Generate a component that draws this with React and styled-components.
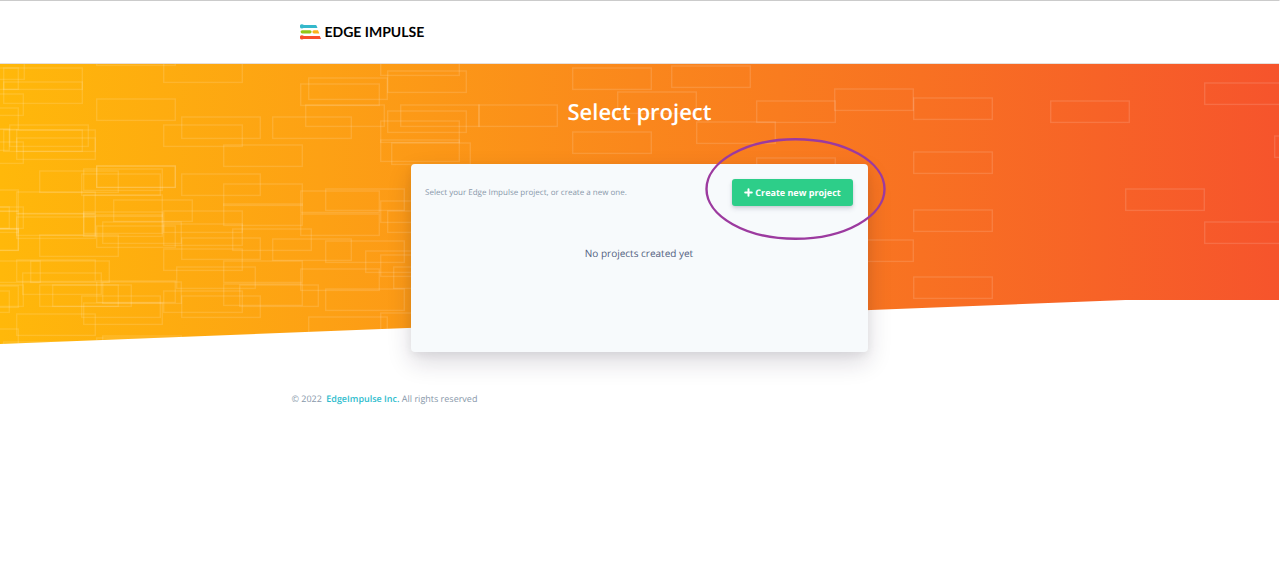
import React from "react";
import styled, { createGlobalStyle } from "styled-components";

const GlobalStyle = createGlobalStyle`
  *, *::before, *::after { box-sizing: border-box; }
  body {
    margin: 0;
    background: #fff;
    font-family: "Open Sans", "Noto Sans", sans-serif;
    color: #525f7f;
    text-rendering: geometricPrecision;
  }
`;

const Page = styled.div`
  border-top: 1px solid #cbcbcb;
  border-right: 1px solid #fff;
`;

const Container = styled.div`
  width: 100%;
  max-width: 696px;
  margin: 0 auto;
`;

const Header = styled.header`
  display: flex;
  align-items: center;
  height: 63px;
  border-bottom: 1px solid #e6e0dc;
`;

const Brand = styled.a`
  display: flex;
  align-items: center;
  gap: 4px;
  width: fit-content;
  margin-left: 8px;
  color: #000;
  font-family: Lato, sans-serif;
  font-size: 14px;
  font-weight: 700;
  line-height: 16px;
  text-decoration: none;
  white-space: nowrap;
`;

const Hero = styled.main`
  position: relative;
  display: flex;
  flex-direction: column;
  align-items: center;
  padding-top: 32px;
`;

const Backdrop = styled.div`
  position: absolute;
  inset: 0 0 auto;
  height: 280px;
  overflow: hidden;
  background: linear-gradient(90deg, #ffb80a 0%, #fda114 25%, #fa871c 50%, #f87122 72%, #f6542c 100%);
  clip-path: polygon(0 0, 100% 0, 100% 236px, 88% 236px, 0 100%);

  svg { display: block; }
`;

const Title = styled.h1`
  position: relative;
  margin: 0 0 36px;
  color: #fff;
  font-size: 22px;
  font-weight: 600;
  line-height: 32px;
`;

const Card = styled.section`
  position: relative;
  width: 457px;
  max-width: 100%;
  min-height: 188px;
  padding: 15px 15px 0 14px;
  border-radius: 4px;
  background: #f7fafc;
  box-shadow: 0 10px 24px rgba(30, 20, 50, 0.16), 0 3px 8px rgba(0, 0, 0, 0.06);
`;

const CardTop = styled.div`
  display: flex;
  align-items: center;
  justify-content: space-between;
`;

const Hint = styled.p`
  margin: 0;
  color: #8898aa;
  font-size: 8px;
  line-height: 12px;
`;

const Action = styled.div`
  position: relative;
`;

const Button = styled.button`
  display: flex;
  align-items: center;
  justify-content: center;
  gap: 2px;
  width: 121px;
  height: 27px;
  padding: 0;
  border: 0;
  border-radius: 3px;
  background: #2dce89;
  box-shadow: 0 3px 5px rgba(50, 50, 93, 0.14), 0 1px 3px rgba(0, 0, 0, 0.1);
  color: #fff;
  font: 700 9px/12px "Open Sans", "Noto Sans", sans-serif;
  text-rendering: inherit;
  white-space: nowrap;
  cursor: pointer;
`;

const Highlight = styled.svg`
  position: absolute;
  top: -41px;
  left: -27px;
  pointer-events: none;
`;

const Empty = styled.p`
  margin: 40px 0 0;
  color: #525f7f;
  font-size: 10px;
  line-height: 14px;
  text-align: center;
`;

const Footer = styled.footer`
  padding: 40px 0;
  color: #8898aa;
  font-size: 9px;
  line-height: 14px;
`;

const FooterLink = styled.a`
  margin-left: 2px;
  color: #2dbccd;
  font-weight: 600;
  text-decoration: none;
`;

const blocks = [
  [-54, -6], [-60, 4], [4, 4], [4, 18], [-55, 30], [-60, 44], [10, 61], [17, 66], [4, 66],
  [17, 74], [-69, 65], [-55, 78], [40, 107], [84, 105], [82, 110], [97, 102], [97, 102],
  [97, 35], [97, -20], [164, -3], [164, 61], [182, 53], [182, 110], [-60, 126], [17, 128],
  [84, 131], [114, 136], [-69, 143], [-55, 143], [-60, 165], [-60, 165], [-60, 147],
  [17, 150], [17, 153], [84, 148], [84, 151], [103, 158], [97, 162], [40, 171], [164, 147],
  [164, 160], [182, 174], [164, 185], [17, 196], [31, 197], [-38, 197], [23, 209],
  [177, 203], [40, 221], [53, 221], [-55, 221], [-60, 222], [-69, 227], [82, 232],
  [97, 217], [103, 218], [84, 239], [164, 227], [182, 232], [17, 250], [-60, 265], [4, 278],
  [97, 274], [103, 272], [224, 81], [224, 120], [301, 20], [309, 14], [306, 41], [273, 53],
  [381, -28], [388, 7], [401, 41], [388, 47], [381, 57], [381, 76], [392, 79], [326, 125],
  [381, -10], [301, 127], [381, 137], [479, 41], [573, 4], [618, 28], [573, 68], [224, 140],
  [301, 150], [388, 147], [233, 165], [273, 175], [326, 177], [366, 187], [381, 191],
  [394, 203], [301, 205], [224, 197], [224, 220], [240, 221], [326, 225], [309, 253],
  [381, 249], [672, 2], [697, 58], [757, 37], [835, 25], [757, 94], [914, 34], [914, 88],
  [914, 146], [835, 176], [914, 213], [1051, 37], [1126, 125], [1205, 19], [1205, 158],
  [1275, 72],
];

function BlockPattern() {
  return (
    <svg width="1280" height="280" fill="none" stroke="#fff" strokeOpacity="0.13" strokeWidth="1.4" aria-hidden="true">
      {blocks.map(([x, y], i) => (
        <rect key={i} x={x - 0.3} y={y} width="78.6" height="21.4" />
      ))}
    </svg>
  );
}

function LogoMark() {
  return (
    <svg width="21" height="16" viewBox="0 0 21 16" aria-hidden="true">
      <g fill="#34b8cb">
        <circle cx="2" cy="2.4" r="2.1" />
        <path d="M2 1h13.6q.7 0 1 .7l.9 2.3H2z" />
      </g>
      <rect x="0.6" y="6.2" width="11" height="3.2" rx="1.6" fill="#93c715" />
      <path d="M14 6.2h4l1.3 3.2H14a1.6 1.6 0 0 1 0-3.2z" fill="#fbb41a" />
      <g fill="#f9502a">
        <circle cx="2" cy="13.4" r="2.1" />
        <path d="M2 12h17.8l1.2 3H2z" />
      </g>
    </svg>
  );
}

export default function App() {
  return (
    <>
      <GlobalStyle />
      <Page>
        <Header>
          <Container>
            <Brand href="/">
              <LogoMark />
              EDGE IMPULSE
            </Brand>
          </Container>
        </Header>
        <Hero>
          <Backdrop>
            <BlockPattern />
          </Backdrop>
          <Title>Select project</Title>
          <Card>
            <CardTop>
              <Hint>Select your Edge Impulse project, or create a new one.</Hint>
              <Action>
                <Button type="button">
                  <svg width="9" height="9" viewBox="0 0 9 9" stroke="#fff" strokeWidth="2" strokeLinecap="round" aria-hidden="true">
                    <path d="M4.5 1.2v6.6M1.2 4.5h6.6" />
                  </svg>
                  Create new project
                </Button>
                <Highlight width="181" height="103" viewBox="0 0 181 103" aria-hidden="true">
                  <ellipse cx="90.5" cy="51" rx="89" ry="49.8" fill="none" stroke="#9c3a9f" strokeWidth="2.4" />
                </Highlight>
              </Action>
            </CardTop>
            <Empty>No projects created yet</Empty>
          </Card>
        </Hero>
        <Container>
          <Footer>
            © 2022 <FooterLink href="/">EdgeImpulse Inc.</FooterLink> All rights reserved
          </Footer>
        </Container>
      </Page>
    </>
  );
}
